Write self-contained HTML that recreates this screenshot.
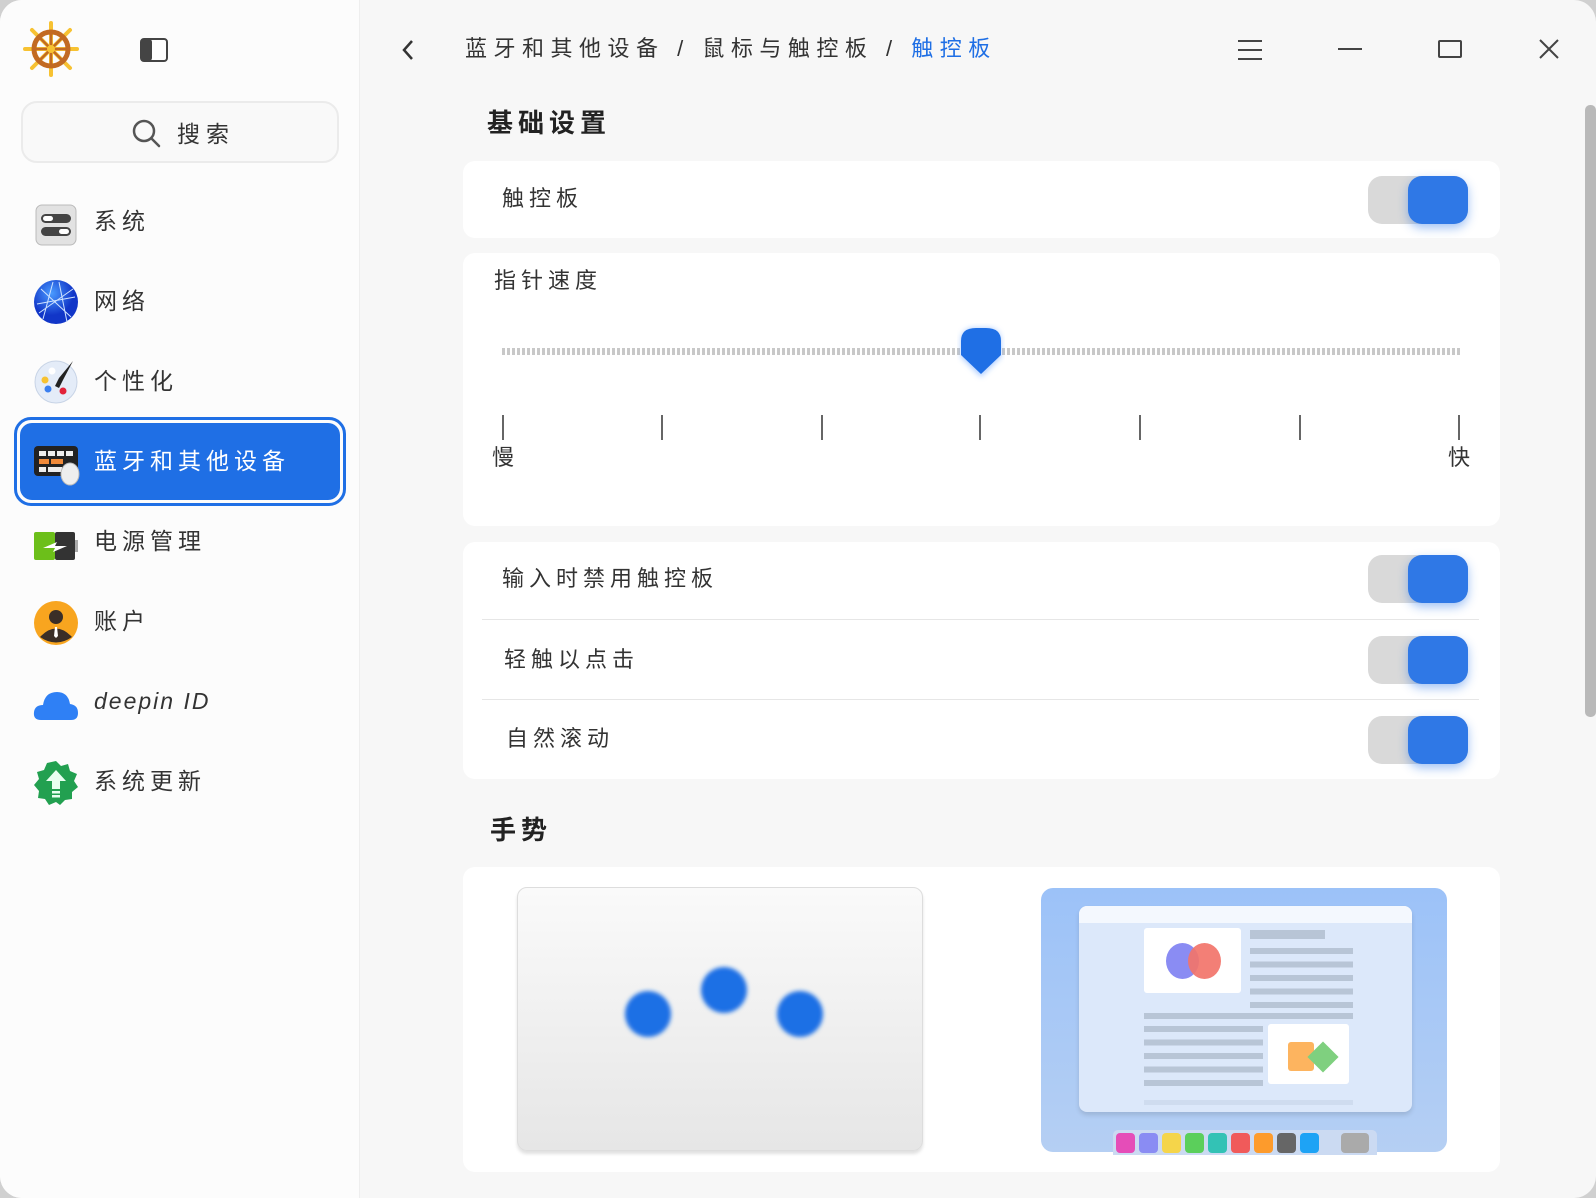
<!DOCTYPE html>
<html><head><meta charset="utf-8"><style>
*{margin:0;padding:0;box-sizing:border-box}
body{width:1596px;height:1198px;background:#d0d0d0;overflow:hidden;font-family:"Liberation Sans","Noto Sans CJK SC",sans-serif;color:#333}
.win{position:absolute;left:0;top:0;width:1596px;height:1198px;background:#f7f7f7;border-radius:22px;overflow:hidden}
.side{position:absolute;left:0;top:0;width:360px;height:1198px;background:#fcfcfc;border-right:1px solid #eee}
.abs{position:absolute}
.search{left:21px;top:101px;width:318px;height:62px;border:2px solid #ebebeb;border-radius:16px;background:#f9f9f9}
.item{position:absolute;left:94px;font-size:23px;letter-spacing:5px;line-height:30px;color:#333}
.ico{position:absolute;left:33px;width:46px;height:46px}
.sel{left:14px;top:417px;width:332px;height:89px;border:3px solid #1f6fe5;border-radius:17px;padding:3px}
.sel div{width:100%;height:100%;background:#1f6fe5;border-radius:12px}
.card{position:absolute;left:463px;width:1037px;background:#fff;border-radius:12px}
.tog{position:absolute;left:905px;width:100px;height:48px;background:#d9d9d9;border-radius:14px}
.tog::after{content:"";position:absolute;right:0;top:0;width:60px;height:48px;background:#2f78e6;border-radius:14px;box-shadow:0 4px 10px rgba(47,120,230,.45)}
.lbl{position:absolute;font-size:22px;letter-spacing:5px;color:#333;line-height:30px}
.sep{position:absolute;left:19px;width:997px;height:1px;background:#e6e6e6}
.tick{position:absolute;top:415px;width:2px;height:25px;background:#666}
</style></head><body>
<div class="win">
<div class="side">
  <svg class="abs" style="left:23px;top:21px" width="56" height="56" viewBox="0 0 56 56">
    <g stroke="#f7c232" stroke-width="4" stroke-linecap="round">
      <line x1="28" y1="2" x2="28" y2="54"/><line x1="2" y1="28" x2="54" y2="28"/>
      <line x1="9" y1="9" x2="47" y2="47"/><line x1="47" y1="9" x2="9" y2="47"/></g>
    <circle cx="28" cy="28" r="17" fill="none" stroke="#c26a22" stroke-width="5"/>
    <g stroke="#c26a22" stroke-width="2.5"><line x1="28" y1="12" x2="28" y2="44"/><line x1="12" y1="28" x2="44" y2="28"/><line x1="17" y1="17" x2="39" y2="39"/><line x1="39" y1="17" x2="17" y2="39"/></g>
    <circle cx="28" cy="28" r="4" fill="#f7c232"/>
  </svg>
  <svg class="abs" style="left:140px;top:38px" width="28" height="24" viewBox="0 0 28 24"><rect x="1" y="1" width="26" height="22" rx="3" fill="#fff" stroke="#444" stroke-width="2"/><rect x="1" y="1" width="11" height="22" rx="3" fill="#444"/></svg>
  <div class="abs search">
    <svg class="abs" style="left:108px;top:15px" width="32" height="32" viewBox="0 0 32 32"><circle cx="13" cy="13" r="10" fill="none" stroke="#555" stroke-width="2.5"/><line x1="20.5" y1="20.5" x2="28" y2="28" stroke="#555" stroke-width="2.5" stroke-linecap="round"/></svg>
    <span class="abs" style="left:154px;top:12px;font-size:23px;letter-spacing:6px">搜索</span>
  </div>
  <svg class="ico" style="top:202px" viewBox="0 0 46 46"><rect x="3" y="3" width="40" height="40" rx="6" fill="#e2e2e2" stroke="#bbb"/><rect x="8" y="12" width="30" height="9" rx="4.5" fill="#444"/><rect x="10" y="14" width="10" height="5" rx="2.5" fill="#fff"/><rect x="8" y="25" width="30" height="9" rx="4.5" fill="#444"/><rect x="26" y="27" width="10" height="5" rx="2.5" fill="#fff"/></svg>
  <div class="item" style="top:206px">系统</div>
  <svg class="ico" style="top:279px" viewBox="0 0 46 46"><defs><radialGradient id="g1" cx=".4" cy=".3"><stop offset="0" stop-color="#4a9bff"/><stop offset="1" stop-color="#1136c8"/></radialGradient></defs><circle cx="23" cy="23" r="22" fill="url(#g1)"/><g stroke="#cfe3ff" stroke-width="1" fill="none"><path d="M8 10 L38 38 M20 3 L10 40 M4 25 L42 18 M26 3 L34 43 M6 34 L40 10"/></g></svg>
  <div class="item" style="top:286px">网络</div>
  <svg class="ico" style="top:358px" viewBox="0 0 46 46"><circle cx="23" cy="24" r="21" fill="#e4ecf8" stroke="#c8d4e6"/><circle cx="12" cy="22" r="3.5" fill="#f7c232"/><circle cx="15" cy="31" r="3.5" fill="#3a7ff0"/><circle cx="30" cy="33" r="3.5" fill="#e2233a"/><circle cx="19" cy="13" r="3.5" fill="#fff"/><path d="M40 3 L30 22 L26 30 L22 28 L26 20 Z" fill="#222"/></svg>
  <div class="item" style="top:366px">个性化</div>
  <div class="abs sel"><div></div></div>
  <svg class="ico" style="top:442px;left:33px;width:48px" viewBox="0 0 48 46"><rect x="1" y="4" width="44" height="30" rx="4" fill="#222"/><g fill="#eee"><rect x="6" y="9" width="7" height="5"/><rect x="15" y="9" width="7" height="5"/><rect x="24" y="9" width="7" height="5"/><rect x="33" y="9" width="7" height="5"/><rect x="6" y="17" width="10" height="5" fill="#f08a3a"/><rect x="18" y="17" width="12" height="5" fill="#f08a3a"/><rect x="6" y="25" width="7" height="5"/><rect x="15" y="25" width="14" height="5"/></g><ellipse cx="37" cy="32" rx="9" ry="11" fill="#eee" stroke="#bbb"/></svg>
  <div class="item" style="top:446px;color:#fff">蓝牙和其他设备</div>
  <svg class="ico" style="top:524px" viewBox="0 0 46 46"><rect x="1" y="8" width="21" height="28" rx="2" fill="#6cbf1a"/><rect x="22" y="8" width="20" height="28" rx="2" fill="#333"/><rect x="42" y="16" width="3" height="12" fill="#aaa"/><path d="M10 24 L24 18 L22 22 L34 22 L20 28 L22 24 Z" fill="#fff"/></svg>
  <div class="item" style="top:526px">电源管理</div>
  <svg class="ico" style="top:600px" viewBox="0 0 46 46"><circle cx="23" cy="23" r="22" fill="#f8a51f"/><circle cx="23" cy="17" r="7" fill="#3a2e27"/><path d="M7 37 Q23 20 39 37 Q23 48 7 37Z" fill="#3a2e27"/><path d="M22 27 L24 27 L25 36 L23 38 L21 36Z" fill="#fff"/></svg>
  <div class="item" style="top:606px">账户</div>
  <svg class="ico" style="top:682px" viewBox="0 0 46 46"><path d="M8 38 Q0 38 1 30 Q2 23 10 23 Q12 10 24 10 Q35 10 37 22 Q45 23 45 31 Q45 38 38 38Z" fill="#2f80f5"/></svg>
  <div class="item" style="top:686px;font-style:italic;letter-spacing:2px">deepin ID</div>
  <svg class="ico" style="top:760px" viewBox="0 0 46 46"><path d="M23 1 L28 6 L35 4 L37 11 L44 14 L41 21 L45 27 L39 32 L39 39 L32 40 L27 45 L23 42 L16 45 L12 39 L5 38 L6 31 L1 25 L6 19 L4 12 L11 10 L14 3 Z" fill="#22a050"/><path d="M23 10 L33 21 L27 21 L27 29 L19 29 L19 21 L13 21Z" fill="#e8fff0"/><rect x="19" y="31" width="8" height="2.5" fill="#e8fff0"/><rect x="19" y="35" width="8" height="2.5" fill="#e8fff0"/></svg>
  <div class="item" style="top:766px">系统更新</div>
</div>

<svg class="abs" style="left:400px;top:38px" width="16" height="24" viewBox="0 0 16 24"><path d="M12 3 L4 12 L12 21" fill="none" stroke="#333" stroke-width="2.5"/></svg>
<div class="abs" style="left:465px;top:34px;font-size:22px;letter-spacing:6.5px;line-height:30px;color:#333;white-space:nowrap">蓝牙和其他设备 / 鼠标与触控板 / <span style="color:#1f6fe5">触控板</span></div>
<svg class="abs" style="left:1237px;top:38px" width="26" height="24" viewBox="0 0 26 24"><g stroke="#444" stroke-width="2"><line x1="1" y1="3" x2="25" y2="3"/><line x1="1" y1="12" x2="25" y2="12"/><line x1="1" y1="21" x2="25" y2="21"/></g></svg>
<div class="abs" style="left:1338px;top:48px;width:24px;height:2px;background:#444"></div>
<div class="abs" style="left:1438px;top:40px;width:24px;height:18px;border:2px solid #444;border-radius:2px"></div>
<svg class="abs" style="left:1539px;top:39px" width="20" height="20" viewBox="0 0 20 20"><path d="M1 1 L19 19 M19 1 L1 19" stroke="#444" stroke-width="2"/></svg>
<div class="abs" style="left:1585px;top:105px;width:11px;height:612px;background:#b9b9b9;border-radius:5px"></div>

<div class="abs" style="left:487px;top:106px;font-size:26px;font-weight:bold;letter-spacing:5px;line-height:34px;color:#222">基础设置</div>
<div class="card" style="top:161px;height:77px"><div class="lbl" style="left:39px;top:23px">触控板</div><div class="tog" style="top:15px"></div></div>

<div class="card" style="top:253px;height:273px">
  <div class="lbl" style="left:31px;top:13px">指针速度</div>
  <div class="abs" style="left:39px;top:95px;width:959px;height:7px;background:repeating-linear-gradient(90deg,#c8c8c8 0 3px,transparent 3px 5px)"></div>
  <svg class="abs" style="left:492px;top:70px" width="52" height="60" viewBox="0 0 52 60"><defs><filter id="b"><feGaussianBlur stdDeviation="3"/></filter></defs><path d="M6 19 Q6 5 20 5 L32 5 Q46 5 46 19 L46 34 L26 54 L6 34Z" fill="#5d9bff" opacity=".5" filter="url(#b)"/><path d="M6 18 Q6 5 21 5 L31 5 Q46 5 46 18 L46 32 L26 51 L6 32Z" fill="#1f6fe5"/></svg>
</div>
<div class="tick" style="left:502px"></div><div class="tick" style="left:661px"></div><div class="tick" style="left:821px"></div><div class="tick" style="left:979px"></div><div class="tick" style="left:1139px"></div><div class="tick" style="left:1299px"></div><div class="tick" style="left:1458px"></div>
<div class="lbl" style="left:492px;top:443px">慢</div>
<div class="lbl" style="left:1448px;top:443px">快</div>

<div class="card" style="top:542px;height:237px">
  <div class="lbl" style="left:39px;top:22px">输入时禁用触控板</div><div class="tog" style="top:13px"></div>
  <div class="sep" style="top:77px"></div>
  <div class="lbl" style="left:41px;top:103px">轻触以点击</div><div class="tog" style="top:94px"></div>
  <div class="sep" style="top:157px"></div>
  <div class="lbl" style="left:43px;top:182px">自然滚动</div><div class="tog" style="top:174px"></div>
</div>

<div class="abs" style="left:490px;top:813px;font-size:26px;font-weight:bold;letter-spacing:5px;line-height:34px;color:#222">手势</div>
<div class="card" style="top:867px;height:305px"></div>
<div class="abs" style="left:517px;top:887px;width:406px;height:264px;border-radius:10px;background:linear-gradient(#fafafa,#e6e6e6);border:1px solid #ddd;box-shadow:0 3px 3px rgba(0,0,0,.12)"></div>
<svg class="abs" style="left:517px;top:887px" width="406" height="264"><defs><filter id="c"><feGaussianBlur stdDeviation="2"/></filter></defs><g fill="#1f6fe5" filter="url(#c)"><circle cx="131" cy="127" r="23"/><circle cx="207" cy="103" r="23"/><circle cx="283" cy="127" r="23"/></g></svg>

<div class="abs" style="left:1041px;top:888px;width:406px;height:264px;border-radius:12px;background:linear-gradient(#9cc2f8,#b5cff3)"></div>
<div class="abs" style="left:1079px;top:906px;width:333px;height:206px;border-radius:8px;background:#dce8fa;box-shadow:0 3px 5px rgba(0,0,0,.12);overflow:hidden"><div style="height:17px;background:#f4f8fe"></div></div>
<div class="abs" style="left:1144px;top:928px;width:97px;height:65px;background:#fff;border-radius:3px"></div>
<div class="abs" style="left:1166px;top:943px;width:33px;height:36px;border-radius:50%;background:#8a8cf3"></div>
<div class="abs" style="left:1188px;top:943px;width:33px;height:36px;border-radius:50%;background:#f2746a;opacity:.92"></div>
<div class="abs" style="left:1268px;top:1024px;width:81px;height:60px;background:#fff;border-radius:3px"></div>
<div class="abs" style="left:1288px;top:1042px;width:26px;height:29px;background:#fdb45f;border-radius:3px"></div>
<div class="abs" style="left:1312px;top:1046px;width:22px;height:22px;background:#7fd07f;transform:rotate(45deg)"></div>
<div class="abs" style="left:1250px;top:930px;width:75px;height:9px;background:#b8c5d6"></div>
<div class="abs" style="left:1250px;top:948px;width:103px;height:144px;background:repeating-linear-gradient(#b8c5d6 0 6px,transparent 6px 13.5px);clip-path:inset(0 0 80px 0)"></div>
<div class="abs" style="left:1144px;top:1013px;width:209px;height:6px;background:#b8c5d6"></div>
<div class="abs" style="left:1144px;top:1026px;width:119px;height:66px;background:repeating-linear-gradient(#b8c5d6 0 6px,transparent 6px 13.5px)"></div>
<div class="abs" style="left:1144px;top:1100px;width:209px;height:5px;background:#cfdcef"></div>
<div class="abs" style="left:1113px;top:1130px;width:264px;height:25px;background:#cbdaf2;border-radius:5px 5px 0 0"></div>
<div class="abs" style="left:1116px;top:1133px;display:flex;gap:4px">
<i style="width:19px;height:20px;border-radius:4px;background:#e54db8;display:block"></i><i style="width:19px;height:20px;border-radius:4px;background:#8a8cf3;display:block"></i><i style="width:19px;height:20px;border-radius:4px;background:#f5d54a;display:block"></i><i style="width:19px;height:20px;border-radius:4px;background:#5bcf5b;display:block"></i><i style="width:19px;height:20px;border-radius:4px;background:#33c2b5;display:block"></i><i style="width:19px;height:20px;border-radius:4px;background:#f05a5a;display:block"></i><i style="width:19px;height:20px;border-radius:4px;background:#fd9b2c;display:block"></i><i style="width:19px;height:20px;border-radius:4px;background:#666;display:block"></i><i style="width:19px;height:20px;border-radius:4px;background:#1ea3f5;display:block"></i><i style="width:14px;display:block"></i><i style="width:28px;height:20px;border-radius:4px;background:#aaa;display:block"></i></div>
</div>
</body></html>
